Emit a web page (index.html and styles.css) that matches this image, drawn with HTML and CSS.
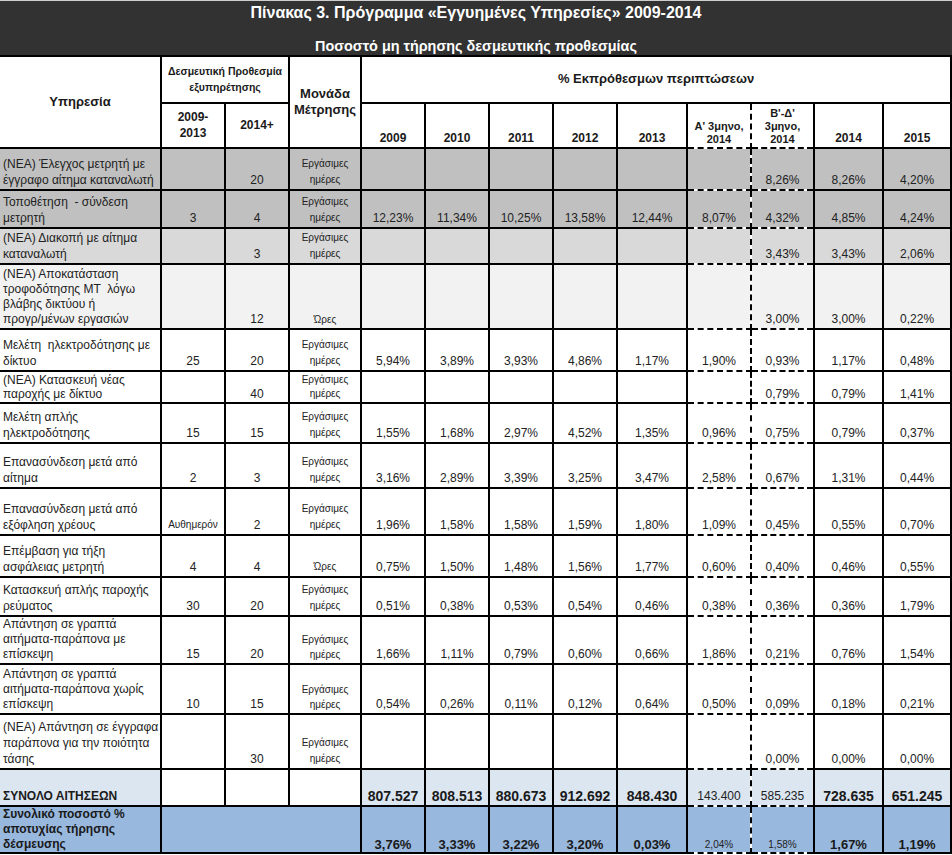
FILE: index.html
```html
<!DOCTYPE html>
<html lang="el">
<head>
<meta charset="utf-8">
<title>Πίνακας 3</title>
<link rel="stylesheet" href="styles.css">
</head>
<body>
<div class="banner">
  <div class="title">Πίνακας 3. Πρόγραμμα «Εγγυημένες Υπηρεσίες» 2009-2014</div>
  <div class="subtitle">Ποσοστό μη τήρησης δεσμευτικής προθεσμίας</div>
</div>
<table class="grid">
  <colgroup>
    <col class="c-svc"><col class="c-n"><col class="c-n"><col class="c-unit">
    <col class="c-n"><col class="c-n"><col class="c-n"><col class="c-n"><col class="c-13">
    <col class="c-n"><col class="c-bd"><col class="c-14"><col class="c-15">
  </colgroup>
  <thead>
    <tr class="h47">
      <th rowspan="2" class="hd mid big">Υπηρεσία</th>
      <th colspan="2" class="hd mid small">Δεσμευτική Προθεσμία<br>εξυπηρέτησης</th>
      <th rowspan="2" class="hd mid big">Μονάδα<br>Μέτρησης</th>
      <th colspan="9" class="hd mid big">% Εκπρόθεσμων περιπτώσεων</th>
    </tr>
    <tr class="h45">
      <th class="hd mid">2009-<br>2013</th>
      <th class="hd mid">2014+</th>
      <th class="hd">2009</th>
      <th class="hd">2010</th>
      <th class="hd">2011</th>
      <th class="hd">2012</th>
      <th class="hd">2013</th>
      <th class="hd qa tiny">Α' 3μηνο,<br>2014</th>
      <th class="hd qb tiny">Β'-Δ'<br>3μηνο,<br>2014</th>
      <th class="hd">2014</th>
      <th class="hd">2015</th>
    </tr>
  </thead>
  <tbody>
    <tr class="h42 g1">
      <td class="svc">(ΝΕΑ) Έλεγχος μετρητή με<br>έγγραφο αίτημα καταναλωτή</td>
      <td></td><td>20</td><td class="unit">Εργάσιμες<br>ημέρες</td>
      <td></td><td></td><td></td><td></td><td></td><td class="qa"></td><td class="qb">8,26%</td><td>8,26%</td><td>4,20%</td>
    </tr>
    <tr class="h38 g1">
      <td class="svc">Τοποθέτηση &nbsp;- σύνδεση<br>μετρητή</td>
      <td>3</td><td>4</td><td class="unit">Εργάσιμες<br>ημέρες</td>
      <td>12,23%</td><td>11,34%</td><td>10,25%</td><td>13,58%</td><td>12,44%</td><td class="qa">8,07%</td><td class="qb">4,32%</td><td>4,85%</td><td>4,24%</td>
    </tr>
    <tr class="h36 g2">
      <td class="svc">(ΝΕΑ) Διακοπή με αίτημα<br>καταναλωτή</td>
      <td></td><td>3</td><td class="unit">Εργάσιμες<br>ημέρες</td>
      <td></td><td></td><td></td><td></td><td></td><td class="qa"></td><td class="qb">3,43%</td><td>3,43%</td><td>2,06%</td>
    </tr>
    <tr class="h65 g3 lh15">
      <td class="svc">(ΝΕΑ) Αποκατάσταση<br>τροφοδότησης ΜΤ &nbsp;λόγω<br>βλάβης δικτύου ή<br>προγρ/μένων εργασιών</td>
      <td></td><td>12</td><td class="unit">Ώρες</td>
      <td></td><td></td><td></td><td></td><td></td><td class="qa"></td><td class="qb">3,00%</td><td>3,00%</td><td>0,22%</td>
    </tr>
    <tr class="h42">
      <td class="svc">Μελέτη &nbsp;ηλεκτροδότησης με<br>δίκτυο</td>
      <td>25</td><td>20</td><td class="unit">Εργάσιμες<br>ημέρες</td>
      <td>5,94%</td><td>3,89%</td><td>3,93%</td><td>4,86%</td><td>1,17%</td><td class="qa">1,90%</td><td class="qb">0,93%</td><td>1,17%</td><td>0,48%</td>
    </tr>
    <tr class="h32 lh14">
      <td class="svc">(ΝΕΑ) Κατασκευή νέας<br>παροχής με δίκτυο</td>
      <td></td><td>40</td><td class="unit">Εργάσιμες<br>ημέρες</td>
      <td></td><td></td><td></td><td></td><td></td><td class="qa"></td><td class="qb">0,79%</td><td>0,79%</td><td>1,41%</td>
    </tr>
    <tr class="h40">
      <td class="svc">Μελέτη απλής<br>ηλεκτροδότησης</td>
      <td>15</td><td>15</td><td class="unit">Εργάσιμες<br>ημέρες</td>
      <td>1,55%</td><td>1,68%</td><td>2,97%</td><td>4,52%</td><td>1,35%</td><td class="qa">0,96%</td><td class="qb">0,75%</td><td>0,79%</td><td>0,37%</td>
    </tr>
    <tr class="h45">
      <td class="svc">Επανασύνδεση μετά από<br>αίτημα</td>
      <td>2</td><td>3</td><td class="unit">Εργάσιμες<br>ημέρες</td>
      <td>3,16%</td><td>2,89%</td><td>3,39%</td><td>3,25%</td><td>3,47%</td><td class="qa">2,58%</td><td class="qb">0,67%</td><td>1,31%</td><td>0,44%</td>
    </tr>
    <tr class="h47">
      <td class="svc">Επανασύνδεση μετά από<br>εξόφληση χρέους</td>
      <td class="unit">Αυθημερόν</td><td>2</td><td class="unit">Εργάσιμες<br>ημέρες</td>
      <td>1,96%</td><td>1,58%</td><td>1,58%</td><td>1,59%</td><td>1,80%</td><td class="qa">1,09%</td><td class="qb">0,45%</td><td>0,55%</td><td>0,70%</td>
    </tr>
    <tr class="h42">
      <td class="svc">Επέμβαση για τήξη<br>ασφάλειας μετρητή</td>
      <td>4</td><td>4</td><td class="unit">Ώρες</td>
      <td>0,75%</td><td>1,50%</td><td>1,48%</td><td>1,56%</td><td>1,77%</td><td class="qa">0,60%</td><td class="qb">0,40%</td><td>0,46%</td><td>0,55%</td>
    </tr>
    <tr class="h39">
      <td class="svc">Κατασκευή απλής παροχής<br>ρεύματος</td>
      <td>30</td><td>20</td><td class="unit">Εργάσιμες<br>ημέρες</td>
      <td>0,51%</td><td>0,38%</td><td>0,53%</td><td>0,54%</td><td>0,46%</td><td class="qa">0,38%</td><td class="qb">0,36%</td><td>0,36%</td><td>1,79%</td>
    </tr>
    <tr class="h48 lh15">
      <td class="svc">Απάντηση σε γραπτά<br>αιτήματα-παράπονα με<br>επίσκεψη</td>
      <td>15</td><td>20</td><td class="unit">Εργάσιμες<br>ημέρες</td>
      <td>1,66%</td><td>1,11%</td><td>0,79%</td><td>0,60%</td><td>0,66%</td><td class="qa">1,86%</td><td class="qb">0,21%</td><td>0,76%</td><td>1,54%</td>
    </tr>
    <tr class="h50 lh15">
      <td class="svc">Απάντηση σε γραπτά<br>αιτήματα-παράπονα χωρίς<br>επίσκεψη</td>
      <td>10</td><td>15</td><td class="unit">Εργάσιμες<br>ημέρες</td>
      <td>0,54%</td><td>0,26%</td><td>0,11%</td><td>0,12%</td><td>0,64%</td><td class="qa">0,50%</td><td class="qb">0,09%</td><td>0,18%</td><td>0,21%</td>
    </tr>
    <tr class="h55">
      <td class="svc">(ΝΕΑ) Απάντηση σε έγγραφα<br>παράπονα για την ποιότητα<br>τάσης</td>
      <td></td><td>30</td><td class="unit">Εργάσιμες<br>ημέρες</td>
      <td></td><td></td><td></td><td></td><td></td><td class="qa"></td><td class="qb">0,00%</td><td>0,00%</td><td>0,00%</td>
    </tr>
    <tr class="h37 total">
      <td class="svc label">ΣΥΝΟΛΟ ΑΙΤΗΣΕΩΝ</td>
      <td class="blank"></td><td class="blank"></td><td class="blank"></td>
      <td class="strong">807.527</td><td class="strong">808.513</td><td class="strong">880.673</td><td class="strong">912.692</td><td class="strong">848.430</td><td class="qa">143.400</td><td class="qb">585.235</td><td class="strong">728.635</td><td class="strong">651.245</td>
    </tr>
    <tr class="h47 rate lh15">
      <td class="svc label">Συνολικό ποσοστό %<br>αποτυχίας τήρησης<br>δέσμευσης</td>
      <td colspan="3"></td>
      <td class="strong">3,76%</td><td class="strong">3,33%</td><td class="strong">3,22%</td><td class="strong">3,20%</td><td class="strong">0,03%</td><td class="qa mini">2,04%</td><td class="qb mini">1,58%</td><td class="strong">1,67%</td><td class="strong">1,19%</td>
    </tr>
  </tbody>
</table>
</body>
</html>
```

FILE: styles.css
```css
html, body {
  margin: 0;
  padding: 0;
  background: #ffffff;
}

body {
  width: 952px;
  font-family: "Liberation Sans", Arial, sans-serif;
  color: #222222;
}

.banner {
  border-top: 1px solid #cfcfcf;
  background: #323232;
  color: #ffffff;
  text-align: center;
  font-weight: bold;
  display: flex;
  flex-direction: column;
}

.title {
  height: 24px;
  line-height: 24px;
  font-size: 16px;
}

.subtitle {
  margin-top: 12px;
  height: 18px;
  line-height: 18px;
  font-size: 14.4px;
}

.grid {
  width: 951px;
  table-layout: fixed;
  border-collapse: collapse;
  font-size: 12px;
}

.c-svc { width: 161px; }
.c-n { width: 64px; }
.c-unit { width: 72px; }
.c-13 { width: 70px; }
.c-bd { width: 63px; }
.c-14 { width: 69px; }
.c-15 { width: 68px; }

.grid th,
.grid td {
  border: 2px solid #000000;
  padding: 0 2px 1px;
  text-align: center;
  vertical-align: bottom;
  line-height: 16px;
  overflow: hidden;
  white-space: nowrap;
}

.grid tr > :first-child {
  border-left: none;
}

.grid th {
  font-weight: bold;
  font-size: 12px;
  color: #1a1a1a;
}

.grid th.mid { vertical-align: middle; }
.grid th.big { font-size: 13px; }
.grid th.small { font-size: 10.5px; }
.grid th.tiny { font-size: 11px; line-height: 13px; }

.grid .qa {
  border-top-style: dashed;
  border-bottom-style: dashed;
  border-right-style: dashed;
}

.grid .qb {
  border-top-style: dashed;
  border-bottom-style: dashed;
  border-left-style: dashed;
}

.grid td.svc {
  text-align: left;
  padding-left: 3px;
}

.grid td.label {
  font-weight: bold;
  font-size: 12px;
  color: #1a1a1a;
}

.grid td.unit {
  font-size: 10px;
}

.grid td.strong {
  font-weight: bold;
  font-size: 13px;
  color: #1a1a1a;
}

.grid td.mini {
  font-size: 10px;
}

.grid .lh14 td { line-height: 14px; }
.grid .lh15 td { line-height: 15px; }

.h32 { height: 32px; }
.h36 { height: 36px; }
.h37 { height: 37px; }
.h38 { height: 38px; }
.h39 { height: 39px; }
.h40 { height: 40px; }
.h42 { height: 42px; }
.h45 { height: 45px; }
.h47 { height: 47px; }
.h48 { height: 48px; }
.h50 { height: 50px; }
.h55 { height: 55px; }
.h65 { height: 65px; }

.g1 td { background: #c0c0c0; }
.g2 td { background: #d9d9d9; }
.g3 td { background: #f2f2f2; }

.total td { background: #dce6f1; }
.total td.blank { background: #ffffff; }
.grid .total td.strong { font-size: 14px; }

.grid .rate td { background: #98b8de; padding-bottom: 0; }
```
